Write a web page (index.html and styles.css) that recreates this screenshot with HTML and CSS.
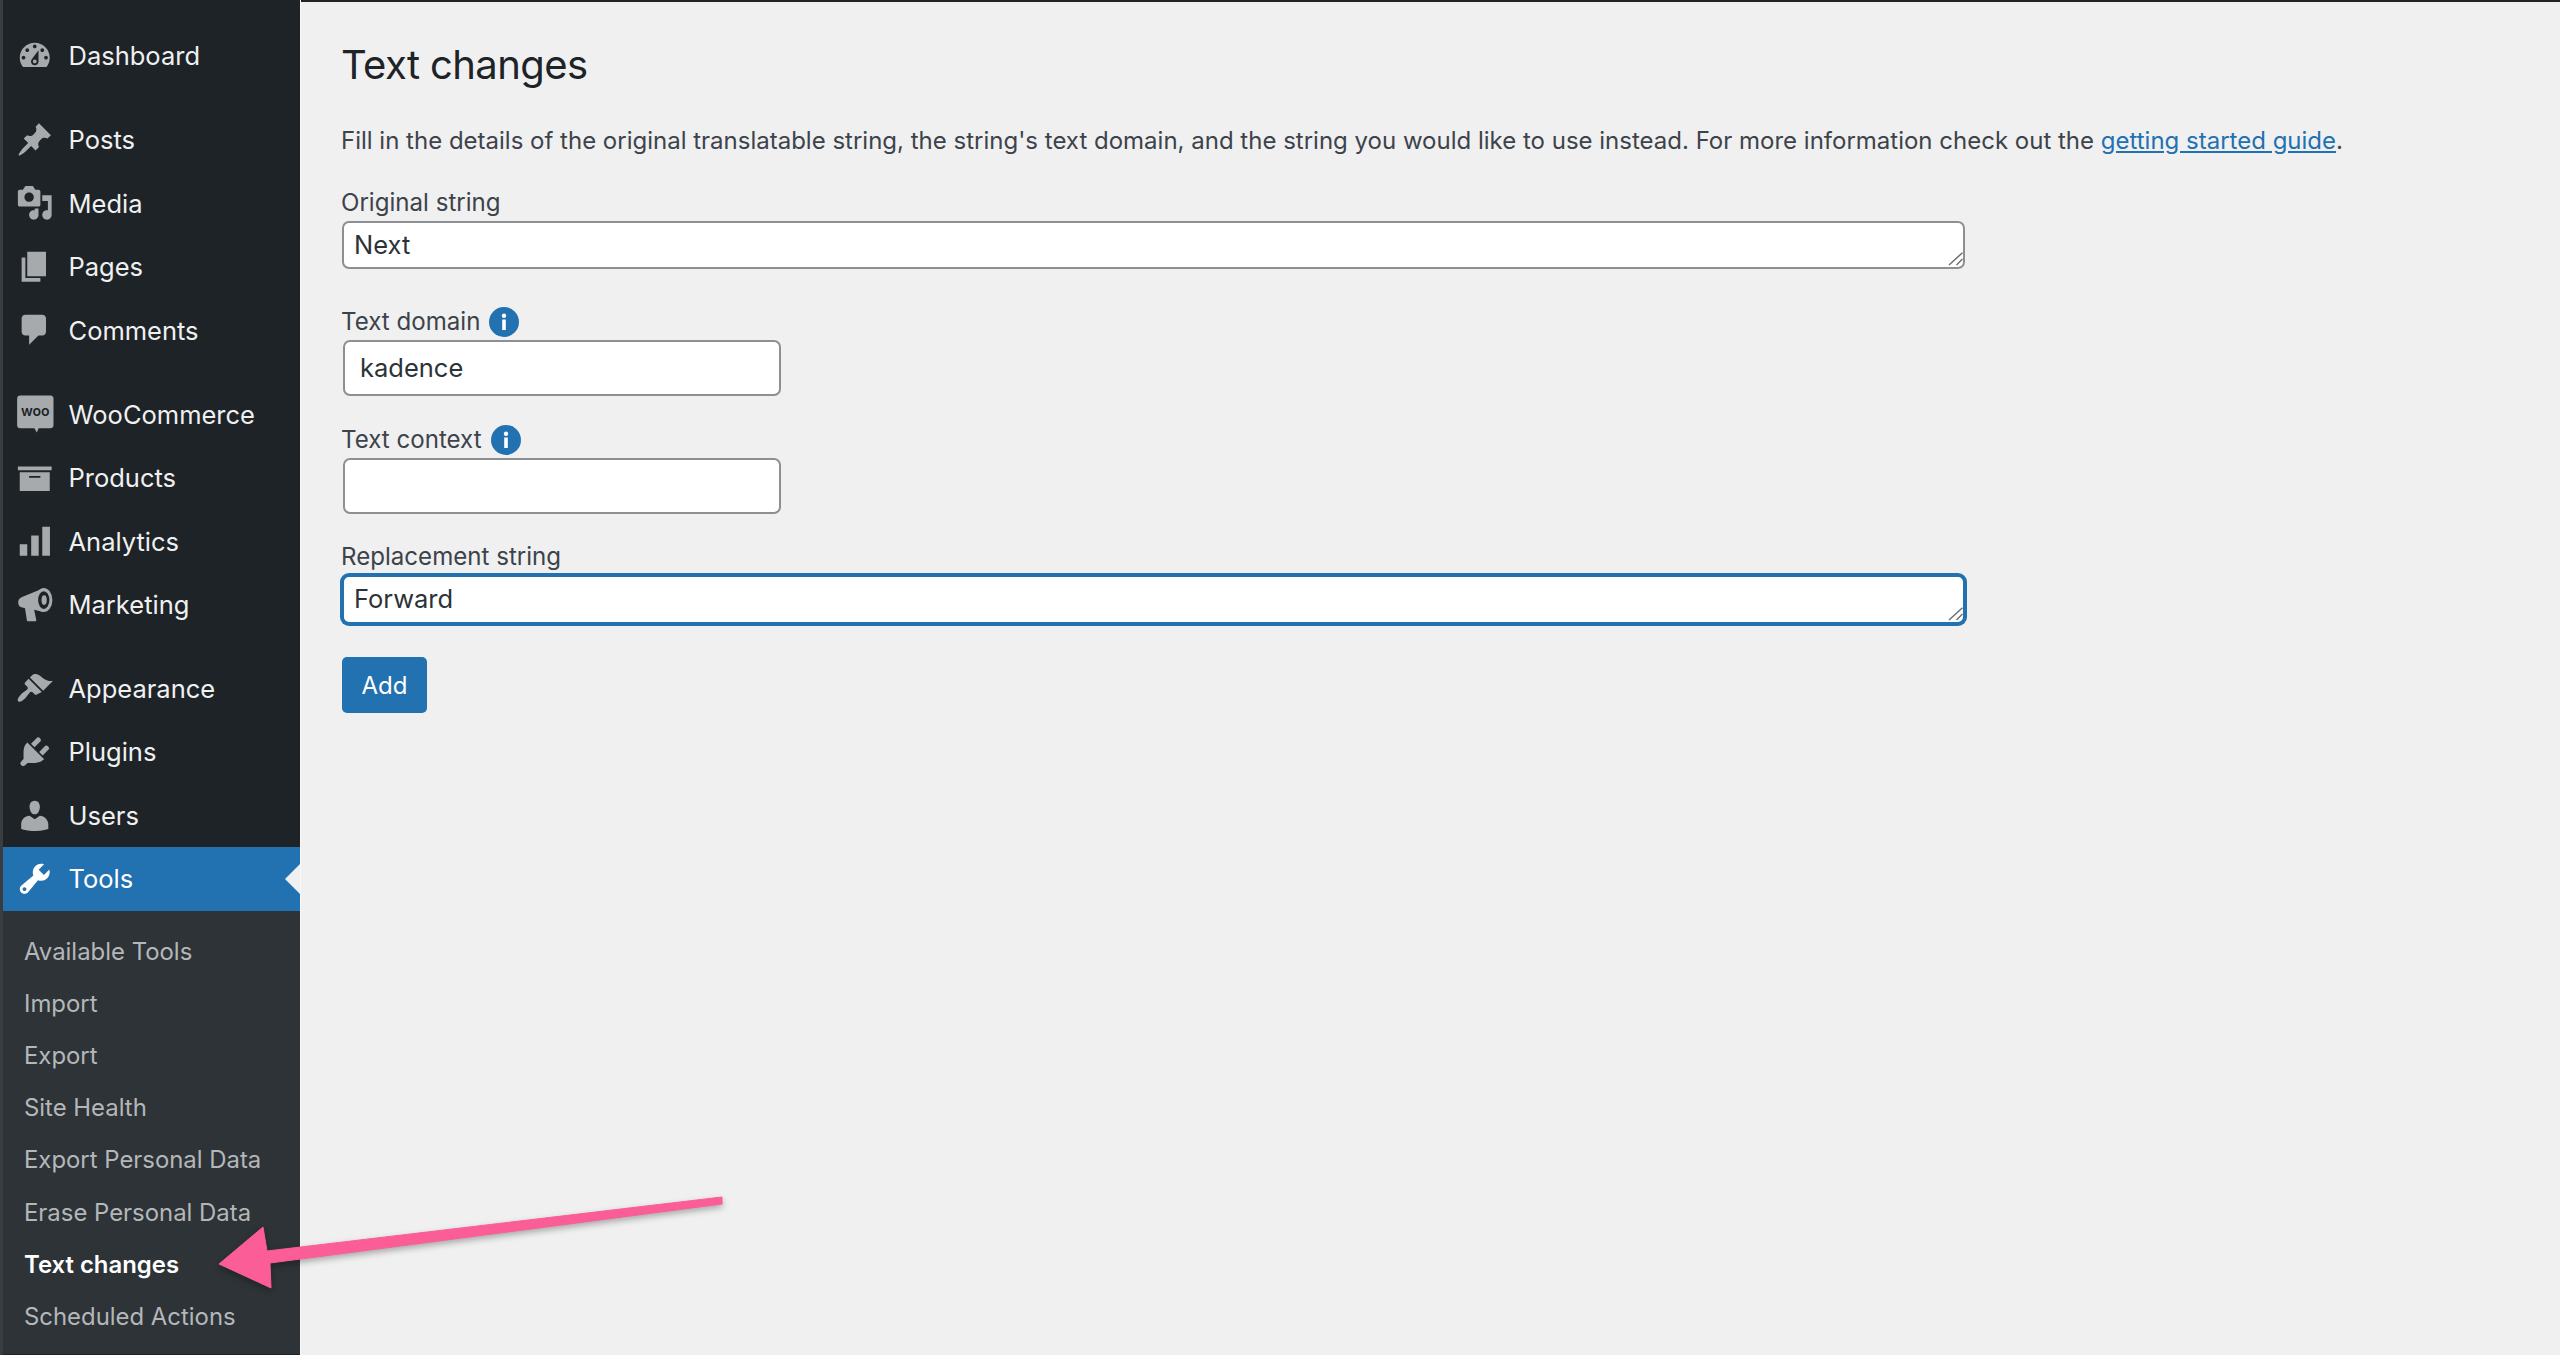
FILE: index.html
```html
<!DOCTYPE html>
<html lang="en">
<head>
<meta charset="utf-8">
<title>Text changes</title>
<link rel="stylesheet" href="styles.css">
</head>
<body>
<div class="page">
  <aside class="sidebar">
    <nav class="menu">
      <a class="item"><svg class="ico" viewBox="0 0 20 20"><path d="M3.76 16h12.48c1.1-1.37 1.76-3.11 1.76-5 0-4.42-3.58-8-8-8s-8 3.58-8 8c0 1.89.66 3.63 1.76 5zM10 4c.55 0 1 .45 1 1s-.45 1-1 1-1-.45-1-1 .45-1 1-1zM6 6c.55 0 1 .45 1 1s-.45 1-1 1-1-.45-1-1 .45-1 1-1zm8 0c.55 0 1 .45 1 1s-.45 1-1 1-1-.45-1-1 .45-1 1-1zm-5.37 5.55L12 7v6c0 1.1-.9 2-2 2s-2-.9-2-2c0-.57.24-1.08.63-1.45zM4 10c.55 0 1 .45 1 1s-.45 1-1 1-1-.45-1-1 .45-1 1-1zm12 0c.55 0 1 .45 1 1s-.45 1-1 1-1-.45-1-1 .45-1 1-1zm-5 3c0-.55-.45-1-1-1s-1 .45-1 1 .45 1 1 1 1-.45 1-1z" fill-rule="evenodd"/></svg><span>Dashboard</span></a>
      <div class="sep"></div>
      <a class="item"><svg class="ico" viewBox="0 0 20 20"><path d="M10.44 3.02l1.82-1.82 6.36 6.35-1.83 1.82c-1.05-.68-2.48-.57-3.41.36l-.75.75c-.92.93-1.04 2.35-.35 3.41l-1.83 1.82-2.41-2.41-2.8 2.79c-.42.42-3.38 2.71-3.8 2.29s1.86-3.39 2.28-3.81l2.79-2.79L4.1 9.36l1.83-1.82c1.05.69 2.48.57 3.4-.36l.75-.75c.93-.92 1.05-2.35.36-3.41z"/></svg><span>Posts</span></a>
      <a class="item"><svg class="ico" viewBox="0 0 20 20"><path d="M13 11V4c0-.55-.45-1-1-1h-1.67L9 1H5L3.67 3H2c-.55 0-1 .45-1 1v7c0 .55.45 1 1 1h10c.55 0 1-.45 1-1zM7 4.5c1.38 0 2.5 1.12 2.5 2.5S8.38 9.5 7 9.5 4.5 8.38 4.5 7 5.62 4.5 7 4.5zM14 6h5v10.5c0 1.38-1.12 2.5-2.5 2.5S14 17.88 14 16.5s1.12-2.5 2.5-2.5c.17 0 .34.02.5.05V9h-3V6zm-4 8.05V13h2v3.5c0 1.38-1.12 2.5-2.5 2.5S7 17.88 7 16.5 8.12 14 9.5 14c.17 0 .34.02.5.05z" fill-rule="evenodd"/></svg><span>Media</span></a>
      <a class="item"><svg class="ico" viewBox="0 0 20 20"><path d="M6 15V2h10v13H6zm-1 1h8v2H3V5h2v11z"/></svg><span>Pages</span></a>
      <a class="item"><svg class="ico" viewBox="0 0 20 20"><path d="M5 2h9c1.1 0 2 .9 2 2v7c0 1.1-.9 2-2 2h-2l-5 5v-5H5c-1.1 0-2-.9-2-2V4c0-1.1.9-2 2-2z"/></svg><span>Comments</span></a>
      <div class="sep"></div>
      <a class="item"><svg class="ico" viewBox="0 0 20 20"><path d="M2.200.3h16.200c.9 0 1.600.7 1.600 1.600v14.200c0 .9-.7 1.600-1.600 1.600h-6.300l-1 2.300-1.300-2.300H2.200c-.9 0-1.600-.7-1.600-1.600V1.900C.6 1 1.300.3 2.200.3z"/><text class="woo" x="10.300" y="11.400" text-anchor="middle">woo</text></svg><span>WooCommerce</span></a>
      <a class="item"><svg class="ico" viewBox="0 0 20 20"><path d="M19 4v2H1V4h18zM2 7h16v10H2V7zm11 3V9H7v1h6z" fill-rule="evenodd"/></svg><span>Products</span></a>
      <a class="item"><svg class="ico" viewBox="0 0 20 20"><path d="M2 11.800h4V18H2zM8.100 7.200h4V18h-4zM14 2.500h4.100V18H14z"/></svg><span>Analytics</span></a>
      <a class="item"><svg class="ico" viewBox="0 0 20 20"><path d="M14 1.400 3.200 5.800C1.500 6.500 1.100 7.700 1.200 9c.1 1.200.6 2 1.700 2.300l1.900.5 1 6.400c.1.400.3.600.7.600h3.700c.4 0 .7-.3.6-.7l-1.100-5.400 4.800 1.200z"/><ellipse cx="14.800" cy="7.500" rx="4.600" ry="6.400"/><ellipse class="mega-hole" cx="14.800" cy="7.500" rx="3" ry="4.700"/><ellipse cx="15" cy="7.500" rx="1.400" ry="2.600"/></svg><span>Marketing</span></a>
      <div class="sep"></div>
      <a class="item"><svg class="ico" viewBox="0 0 20 20"><path d="M14.480 11.060L7.410 3.990l1.500-1.500c.5-.56 2.300-.47 3.510.32 1.210.8 1.430 1.280 2.910 2.100 1.180.64 2.450 1.260 4.450.85zm-.71.71L6.700 4.700 4.930 6.470c-.39.39-.39 1.020 0 1.410l1.060 1.060c.39.39.39 1.030 0 1.420-.6.6-1.430 1.110-2.210 1.690-.35.26-.7.53-1.010.84-1.340 1.340-2.370 2.950-1.580 3.740.79.79 2.400-.24 3.740-1.580.31-.31.58-.66.85-1.010.57-.79 1.090-1.610 1.680-2.210.39-.39 1.020-.39 1.410 0l1.060 1.060c.39.39 1.020.39 1.410 0z"/></svg><span>Appearance</span></a>
      <a class="item"><svg class="ico" viewBox="0 0 20 20"><path d="M13.110 4.360L9.870 7.600 8 5.730l3.240-3.240c.35-.34 1.050-.2 1.560.32.52.51.66 1.210.31 1.550zm-8 1.770l.91-1.120 9.010 9.010-1.190.84c-.71.71-2.630 1.160-3.820 1.160H6.140L4.900 17.260c-.59.59-1.540.59-2.120 0-.59-.58-.59-1.530 0-2.120l1.240-1.240v-3.880c0-1.130.4-3.190 1.090-3.890zm7.260 3.970l3.240-3.240c.34-.35 1.040-.21 1.550.31.52.51.66 1.210.31 1.550l-3.240 3.250z"/></svg><span>Plugins</span></a>
      <a class="item"><svg class="ico" viewBox="0 0 20 20"><path d="M10 9.250c-2.270 0-2.730-3.440-2.730-3.440C7 4.020 7.820 2 9.970 2c2.160 0 2.980 2.020 2.710 3.810 0 0-.41 3.440-2.680 3.440zm0 2.570L12.720 10c2.390 0 4.520 2.330 4.520 4.530v2.490s-3.650 1.130-7.240 1.130c-3.650 0-7.240-1.130-7.240-1.130v-2.490c0-2.250 1.940-4.480 4.470-4.480z"/></svg><span>Users</span></a>
      <a class="item current"><svg class="ico" viewBox="0 0 20 20"><path d="M16.680 9.770c-1.340 1.340-3.300 1.670-4.950.99l-5.410 6.520c-.99.99-2.590.99-3.580 0s-.99-2.590 0-3.570l6.520-5.420c-.68-1.650-.35-3.610.99-4.950 1.280-1.280 3.120-1.620 4.720-1.060l-2.890 2.890 2.820 2.820 2.860-2.870c.53 1.580.18 3.390-1.080 4.650zM3.810 16.210c.4.390 1.040.39 1.430 0 .4-.4.4-1.040 0-1.430-.39-.4-1.030-.4-1.430 0-.39.39-.39 1.030 0 1.430z" fill-rule="evenodd"/></svg><span>Tools</span></a>
      <div class="submenu">
        <a class="sub">Available Tools</a>
        <a class="sub">Import</a>
        <a class="sub">Export</a>
        <a class="sub">Site Health</a>
        <a class="sub">Export Personal Data</a>
        <a class="sub">Erase Personal Data</a>
        <a class="sub active">Text changes</a>
        <a class="sub">Scheduled Actions</a>
      </div>
    </nav>
  </aside>
  <main class="content">
    <h1 class="title">Text changes</h1>
    <p class="intro">Fill in the details of the original translatable string, the string's text domain, and the string you would like to use instead. For more information check out the <a class="link">getting started guide</a>.</p>
    <label class="lab lab-first">Original string</label>
    <div class="area-wrap">
      <textarea class="area" rows="1">Next</textarea>
      <svg class="grip" viewBox="0 0 16 16"><path d="M2 14 15.500 1.700M9.500 14l6-6"/></svg>
    </div>
    <label class="lab lab-domain">Text domain <svg class="info" viewBox="0 0 30 30"><circle cx="15" cy="15" r="15"/><rect class="info-i" x="13.200" y="12.500" width="3.600" height="10.500"/><circle class="info-i" cx="15" cy="8.700" r="2.200"/></svg></label>
    <input class="field" type="text" value="kadence">
    <label class="lab">Text context <svg class="info" viewBox="0 0 30 30"><circle cx="15" cy="15" r="15"/><rect class="info-i" x="13.200" y="12.500" width="3.600" height="10.500"/><circle class="info-i" cx="15" cy="8.700" r="2.200"/></svg></label>
    <input class="field" type="text" value="">
    <label class="lab lab-last">Replacement string</label>
    <div class="area-wrap area-wrap-focus">
      <textarea class="area focus" rows="1">Forward</textarea>
      <svg class="grip" viewBox="0 0 16 16"><path d="M2 14 15.500 1.700M9.500 14l6-6"/></svg>
    </div>
    <button class="btn" type="button">Add</button>
  </main>
  <svg class="arrow" width="2560" height="1355" viewBox="0 0 2560 1355"><polygon points="219,1264 263,1227 267,1251 722,1197 722,1204 270,1263 271,1288"/></svg>
</div>
</body>
</html>
```
FILE: styles.css
```css
* { box-sizing: border-box; }
html, body { margin: 0; height: 100%; overflow: hidden; }
body { background: #f0f0f1; font-family: Inter, "Liberation Sans", sans-serif; color: #3c434a; }
.page { position: relative; display: flex; height: 1355px; width: 2560px; overflow: hidden; }

.sidebar { width: 301px; height: 1355px; flex: none; overflow: hidden; background: #1d2327; border-left: 3px solid #3a3d40; border-right: 1px solid #f8f8f8; }
.menu { display: flex; flex-direction: column; padding-top: 24px; }
.item { display: flex; align-items: center; height: 63.500px; padding-left: 13px; color: #f0f0f1; font-size: 25.500px; gap: 15px; }
.ico { width: 37.500px; height: 37.500px; fill: #a7aaad; flex: none; }
.mega-hole { fill: #1d2327; }
.woo { font: 600 7.500px Inter, sans-serif; fill: #1d2327; }
.sep { height: 20.400px; }
.current { position: relative; background: #2271b1; color: #fff; }
.current .ico { fill: #fff; }
.current::after { content: ""; position: absolute; right: 0; top: 17px; border: 15px solid transparent; border-right-color: #f0f0f1; border-left-width: 0; width: 0; height: 0; }
.submenu { background: #2d3336; display: flex; flex-direction: column; padding-top: 15px; padding-bottom: 11px; }
.sub { height: 52.200px; line-height: 52.200px; padding-left: 21px; font-size: 23.900px; color: #b4b7ba; }
.sub.active { color: #fff; font-weight: 600; }

.content { flex: 1; padding: 41px 0 0 40px; border-top: 2px solid #1d2327; display: flex; flex-direction: column; align-items: flex-start; }
.title { margin: 0; font-size: 40px; line-height: 44px; font-weight: 400; letter-spacing: -.6px; color: #1d2327; }
.intro { margin: 36px 0 0; font-size: 24px; line-height: 36px; white-space: nowrap; }
.link { color: #2271b1; text-decoration: underline; }
.lab { display: flex; align-items: center; gap: 9px; height: 30px; margin-top: 29px; font-size: 24.100px; line-height: 30px; }
.lab-domain { margin-top: 38px; }
.lab-last { margin-top: 28px; }
.info { width: 30px; height: 30px; fill: #2271b1; }
.info-i { fill: #fff; }
.area-wrap { position: relative; margin: 3px 0 0 1px; }
.grip { position: absolute; right: 2px; bottom: 2px; width: 16px; height: 16px; fill: none; stroke: #6f6f6f; stroke-width: 1.500; }
.area { display: block; width: 1623px; height: 48px; padding: 7px 10px; border: 2px solid #8c8f94; border-radius: 7px; background: #fff; color: #2c3338; font: 25.500px/30px Inter, sans-serif; outline: none; resize: none; overflow: hidden; }
.area.focus { height: 49px; border-color: #2271b1; box-shadow: 0 0 0 2px #2271b1; }
.field { display: block; width: 438px; height: 56px; margin: 3px 0 0 2px; padding: 0 15px 2px; border: 2px solid #8c8f94; border-radius: 7px; background: #fff; color: #2c3338; font: 25.500px Inter, sans-serif; outline: none; }
.btn { margin: 33px 0 0 1px; width: 85px; height: 56px; border: 0; border-radius: 5px; background: #2271b1; color: #fff; font: 24px Inter, sans-serif; padding: 0; }

.arrow { position: absolute; left: 0; top: 0; pointer-events: none; fill: #fb5d96; stroke: #fb5d96; stroke-width: 1; stroke-linejoin: round; filter: drop-shadow(0 3px 3px rgba(0,0,0,.3)); }
```
